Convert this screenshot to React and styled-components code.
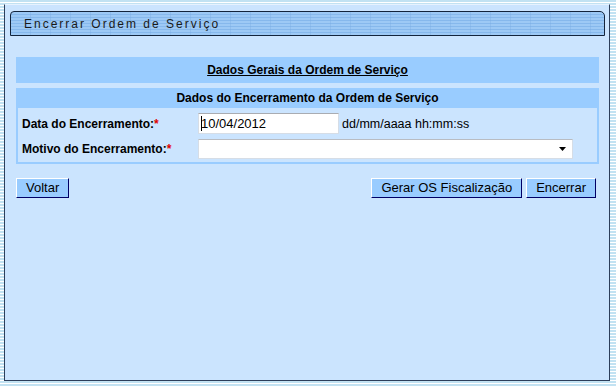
import React from "react";
import styled, { createGlobalStyle } from "styled-components";

const GlobalStyle = createGlobalStyle`
  html, body {
    margin: 0;
    padding: 0;
  }
  body {
    width: 616px;
    height: 386px;
    overflow: hidden;
    font-family: "Liberation Sans", Arial, sans-serif;
    background: repeating-linear-gradient(
      to bottom,
      #c2e2f2 0px,
      #c2e2f2 2px,
      #ffffff 2px,
      #ffffff 3px
    );
  }
`;

const Panel = styled.div`
  box-sizing: border-box;
  margin: 4px 0 0 4px;
  width: 606px;
  height: 377px;
  background: #cbe4fe;
  border: 1px solid #2c3e5a;
  border-top-color: #e6f2ff;
  padding: 6px 4px 0 5px;
  display: flex;
  flex-direction: column;
`;

const TitleTab = styled.div`
  box-sizing: border-box;
  height: 25px;
  border: 1px solid #13243c;
  border-radius: 4px 5px 0 0;
  background:
    repeating-linear-gradient(
      to right,
      transparent 0px,
      transparent 19px,
      rgba(120, 170, 225, 0.35) 19px,
      rgba(120, 170, 225, 0.35) 20px
    ),
    repeating-linear-gradient(
      to bottom,
      #9dc9f5 0px,
      #9dc9f5 2px,
      #86b8ec 2px,
      #86b8ec 3px
    );
  display: flex;
  align-items: center;
  padding-left: 13px;
  font-size: 12px;
  letter-spacing: 2px;
  color: #1a1a1a;
`;

const Content = styled.div`
  display: flex;
  flex-direction: column;
  padding: 21px 6px 0 6px;
`;

const GeneralBar = styled.div`
  height: 26px;
  background: #99ccff;
  display: flex;
  align-items: center;
  justify-content: center;
  font-size: 12px;
  font-weight: bold;
  text-decoration: underline;
  color: #000;
`;

const Section = styled.div`
  margin-top: 5px;
  border: 2px solid #99ccff;
  border-top: none;
  background: #cbe4fe;
`;

const SectionHeader = styled.div`
  height: 20px;
  background: #99ccff;
  display: flex;
  align-items: center;
  justify-content: center;
  font-size: 12px;
  font-weight: bold;
  color: #000;
  margin: 0 -2px;
`;

const Form = styled.div`
  display: grid;
  grid-template-columns: 176px 1fr;
  row-gap: 5px;
  padding: 5px 0 3px 4px;
`;

const Label = styled.div`
  font-size: 12px;
  font-weight: bold;
  color: #000;
  display: flex;
  align-items: center;
`;

const Req = styled.span`
  color: #e00000;
`;

const Field = styled.div`
  display: flex;
  align-items: center;
  gap: 3px;
`;

const InputWrap = styled.div`
  position: relative;
`;

const TextInput = styled.input`
  box-sizing: border-box;
  width: ${(p) => p.$w}px;
  height: 21px;
  border: 1px solid #d6dde6;
  border-top-color: #a9acb2;
  background: #fff;
  font-family: "Liberation Sans", Arial, sans-serif;
  font-size: 13px;
  color: #000;
  padding: 0 0 0 2px;
  outline: none;
`;

const Caret = styled.span`
  position: absolute;
  left: 3px;
  top: 3px;
  width: 1px;
  height: 15px;
  background: #000;
`;

const Hint = styled.span`
  font-size: 12.5px;
  color: #000;
`;

const SelectBox = styled.div`
  box-sizing: border-box;
  width: 375px;
  height: 20px;
  background: #fff;
  border: 1px solid #d6dde6;
  border-top-color: #b9bcc2;
  display: flex;
  align-items: center;
  justify-content: flex-end;
  padding-right: 6px;
`;

const ButtonRow = styled.div`
  display: flex;
  align-items: center;
  margin-top: 14px;
  margin-right: 3px;
  gap: 4px;
`;

const Spacer = styled.div`
  flex: 1;
`;

const Button = styled.button`
  box-sizing: border-box;
  height: 20px;
  margin: 0;
  padding: 0 9px;
  background: #99ccff;
  border: 1px solid;
  border-color: #ffffff #000066 #000066 #ffffff;
  font-family: "Liberation Sans", Arial, sans-serif;
  font-size: 13px;
  color: #000;
  line-height: 18px;
  cursor: pointer;
`;

const App = () => {
  return (
    <>
      <GlobalStyle />
      <Panel>
        <TitleTab>Encerrar Ordem de Serviço</TitleTab>
        <Content>
          <GeneralBar>Dados Gerais da Ordem de Serviço</GeneralBar>
          <Section>
            <SectionHeader>Dados do Encerramento da Ordem de Serviço</SectionHeader>
            <Form>
              <Label>
                Data do Encerramento:<Req>*</Req>
              </Label>
              <Field>
                <InputWrap>
                  <TextInput $w={141} defaultValue="10/04/2012" readOnly />
                  <Caret />
                </InputWrap>
                <Hint>dd/mm/aaaa hh:mm:ss</Hint>
              </Field>
              <Label>
                Motivo do Encerramento:<Req>*</Req>
              </Label>
              <Field>
                <SelectBox>
                  <svg width="7" height="4" viewBox="0 0 7 4">
                    <path d="M0 0 L7 0 L3.5 4 Z" fill="#000" />
                  </svg>
                </SelectBox>
              </Field>
            </Form>
          </Section>
          <ButtonRow>
            <Button>Voltar</Button>
            <Spacer />
            <Button>Gerar OS Fiscalização</Button>
            <Button>Encerrar</Button>
          </ButtonRow>
        </Content>
      </Panel>
    </>
  );
};

export default App;
